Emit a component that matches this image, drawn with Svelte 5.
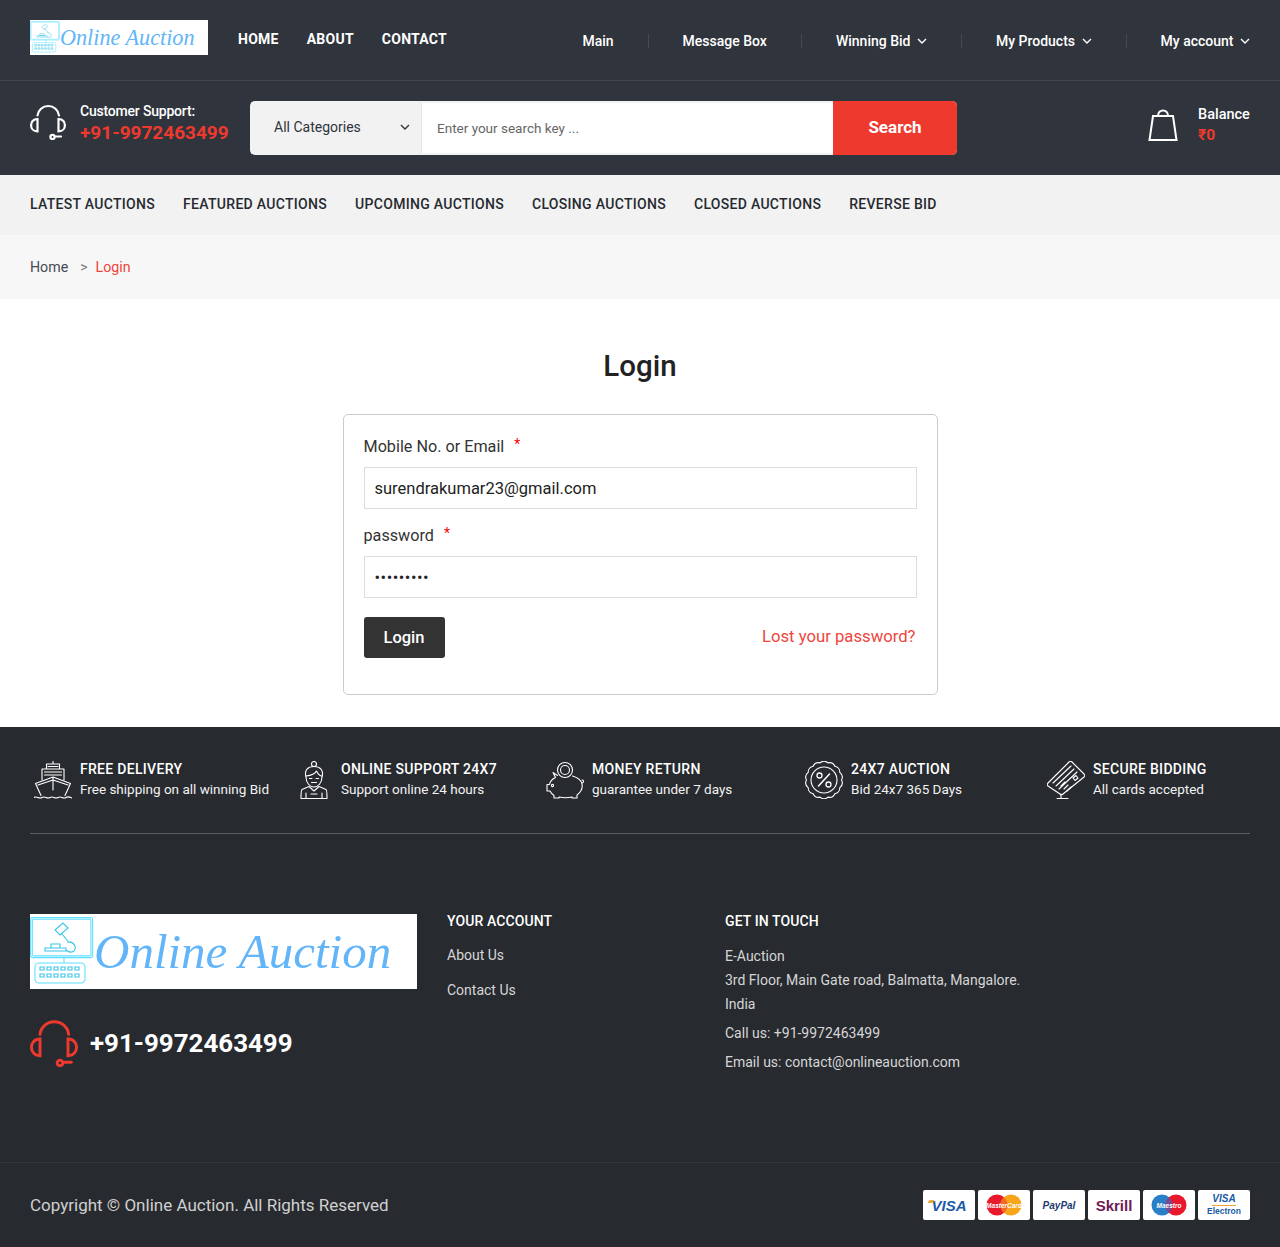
<script>
    const menu = [
        { label: 'Main' },
        { label: 'Message Box' },
        { label: 'Winning Bid', arrow: true },
        { label: 'My Products', arrow: true },
        { label: 'My account', arrow: true }
    ];
    const tabs = ['Latest Auctions', 'Featured Auctions', 'Upcoming Auctions', 'Closing Auctions', 'Closed Auctions', 'Reverse Bid'];
    const services = [
        { icon: 'ship', title: 'Free Delivery', text: 'Free shipping on all winning Bid' },
        { icon: 'agent', title: 'Online Support 24x7', text: 'Support online 24 hours' },
        { icon: 'piggy', title: 'Money Return', text: 'guarantee under 7 days' },
        { icon: 'badge', title: '24x7 Auction', text: 'Bid 24x7 365 Days' },
        { icon: 'card', title: 'Secure Bidding', text: 'All cards accepted' }
    ];

    // scalloped edge of the percent badge
    const scallop = Array.from({ length: 14 }, (_, i) => {
        const a = (i / 14) * Math.PI * 2;
        const x = (19 + 17.5 * Math.cos(a)).toFixed(1);
        const y = (19 + 17.5 * Math.sin(a)).toFixed(1);
        return `${i === 0 ? 'M' : 'A6 6 0 0 1 '}${x} ${y}`;
    }).join(' ') + ' A6 6 0 0 1 36.500 19Z';
</script>

{#snippet headset(cls)}
    <svg class={cls} viewBox="0 0 36 36" fill="none" stroke="currentColor" stroke-width="2.200" stroke-linecap="round">
        <path d="M7.500 11.500A10.800 10.500 0 0 1 29 11.500" />
        <path d="M7.500 15V27.500C3 27.500 1.100 24 1.100 21.200C1.100 18.500 3 15 7.500 15Z" />
        <path d="M28.500 15V27.500C33 27.500 34.900 24 34.900 21.200C34.900 18.500 33 15 28.500 15Z" />
        <circle cx="22.500" cy="33" r="2.100" />
        <path d="M25 32.500H31" />
    </svg>
{/snippet}

{#snippet logo(cls)}
    <div class="logo {cls}">
        <svg class="logo-mark" viewBox="0 0 64 70" fill="none" stroke="#5fe0ff" stroke-width="1.100">
            <rect x="0.600" y="0.600" width="62" height="40" rx="2" />
            <rect x="2.300" y="2.300" width="58.600" height="36.600" rx="1.500" />
            <path d="M34 41V46" />
            <rect x="5" y="46" width="50" height="20" rx="4" />
            <path d="M25 13L33 6L38 11L30 18ZM31 16L38 24M15 31H36V34H15ZM21 27H30V31H21Z" stroke="#39c5e8" />
            <path d="M37 25C44 24 47 30 44 34C41 36 38 35 36 33" stroke="#39c5e8" />
            <path d="M10 50h4v3h-4zM17 50h4v3h-4zM24 50h4v3h-4zM31 50h4v3h-4zM38 50h4v3h-4zM45 50h4v3h-4zM10 57h4v3h-4zM17 57h4v3h-4zM24 57h4v3h-4zM31 57h4v3h-4zM38 57h4v3h-4zM45 57h4v3h-4z" stroke="#39c5e8" />
        </svg>
        <span class="logo-text">Online Auction</span>
    </div>
{/snippet}

{#snippet chevron()}
    <svg class="chev" viewBox="0 0 10 6" fill="none" stroke="currentColor" stroke-width="1.400"><path d="M1 1L5 5L9 1" /></svg>
{/snippet}

{#snippet serviceIcon(name)}
    <svg class="svc-icon" viewBox="0 0 38 38" fill="none" stroke="#fff" stroke-width="1.100" stroke-linejoin="round" stroke-linecap="round">
        {#if name === 'ship'}
            <path d="M19 0V3M12.500 8V3H25.500V8M8 19V8H30V19M14 5.500H24M10.500 11H27.500M10.500 14H27.500" />
            <path d="M19 16L1.500 22.500L7 34.500M19 16L36.500 22.500L31 34.500M19 16V29M4 24L19 19L34 24" />
            <path d="M0 36.500C3 34.500 5 38.500 8 36.500C11 34.500 13 38.500 16 36.500C19 34.500 21 38.500 24 36.500C27 34.500 29 38.500 32 36.500C34 35 36 36 38 37" />
        {:else if name === 'agent'}
            <circle cx="19" cy="3" r="2.500" />
            <path d="M11 16C9 9 13 5.500 19 5.500C25 5.500 29 9 27 16C27 22 23 26 19 26C15 26 11 22 11 16Z" />
            <path d="M11 15C16 14.500 20 13 21.500 10C23 13 25 15 27 15M14.500 17.500H17M21 17.500H23.500M16.500 21.500H21.500" />
            <path d="M14 25.500L7 28.500C6 29 6 31 6 37.500H32C32 31 32 29 31 28.500L24 25.500M14 25.500L19 30L24 25.500M11 37.500V32M27 37.500V32M16 33H22" />
        {:else if name === 'piggy'}
            <circle cx="19" cy="9" r="7.500" />
            <circle cx="19" cy="9" r="4.500" />
            <path d="M11.500 14.500C9 13 7 11.500 7 11.500L9.500 16.500C6 18 4 21 3.500 23.500H1V30H4C5 32 6.500 33.500 8 34.500V37H13V36C17 37 22 37 26 36V37H31V34C35 31 37 28 36 23C35 19 32 16.500 26.500 15M36 22C38 22 38 19 36 19" />
            <circle cx="6.500" cy="24.500" r="1.100" />
        {:else if name === 'badge'}
            <path d={scallop} />
            <circle cx="19" cy="19" r="13" />
            <path d="M24.500 13L13.500 25" stroke-width="1.500" />
            <circle cx="14.500" cy="14.500" r="2.500" stroke-width="1.300" />
            <circle cx="23.500" cy="23.500" r="2.500" stroke-width="1.300" />
        {:else}
            <path d="M1 22L22 1C23 0 24 0 25 1L37 13C38 14 38 15 37 16L16 33C15 34 14 34 13 33L1 25C0 24 0 23 1 22Z" />
            <path d="M6 22L24 5M9 25L27 8M12 28L30 11M26 17L29 14.500L31 17L28 19.500ZM14 25L18 21M17 28L21 24M20 30L24 26" />
            <path d="M10 37.500H21M14 33V37.500" />
        {/if}
    </svg>
{/snippet}

<header class="topbar">
    {@render logo('logo-small')}
    <nav class="mainnav">
        <a href="#home">Home</a>
        <a href="#about">About</a>
        <a href="#contact">Contact</a>
    </nav>
    <ul class="usermenu">
        {#each menu as item}
            <li>{item.label}{#if item.arrow}{@render chevron()}{/if}</li>
        {/each}
    </ul>
</header>

<section class="searchbar">
    <div class="support">
        {@render headset('support-icon')}
        <div class="support-text">
            <div class="support-label">Customer Support:</div>
            <div class="support-phone">+91-9972463499</div>
        </div>
    </div>
    <form class="search" onsubmit={(e) => e.preventDefault()}>
        <div class="category">All Categories{@render chevron()}</div>
        <input class="search-input" placeholder="Enter your search key ..." />
        <button class="search-btn">Search</button>
    </form>
    <div class="balance">
        <svg class="bag" viewBox="0 0 30 32" fill="none" stroke="#fff" stroke-width="2">
            <path d="M5 7H25L28.500 31H1.500Z" stroke-linejoin="miter" />
            <path d="M10 7C10 -0.500 20 -0.500 20 7" />
        </svg>
        <div>
            <div class="balance-label">Balance</div>
            <div class="balance-value">₹0</div>
        </div>
    </div>
</section>

<nav class="tabs">
    {#each tabs as tab}
        <a href="#tab">{tab}</a>
    {/each}
</nav>

<div class="crumbs">
    <a href="#home">Home</a>
    <span class="crumb-sep">&gt;</span>
    <span class="crumb-now">Login</span>
</div>

<main>
    <h1>Login</h1>
    <form class="login" onsubmit={(e) => e.preventDefault()}>
        <label for="user">Mobile No. or Email <sup>*</sup></label>
        <input id="user" class="field" value="surendrakumar23@gmail.com" />
        <label for="pass">password <sup>*</sup></label>
        <input id="pass" class="field pass" type="password" value="secret123" />
        <div class="login-actions">
            <button class="login-btn">Login</button>
            <a class="lost" href="#lost">Lost your password?</a>
        </div>
    </form>
</main>

<footer>
    <div class="services">
        {#each services as s}
            <div class="service">
                {@render serviceIcon(s.icon)}
                <div>
                    <div class="svc-title">{s.title}</div>
                    <div class="svc-text">{s.text}</div>
                </div>
            </div>
        {/each}
    </div>

    <div class="foot-main">
        <div class="foot-brand">
            {@render logo('logo-big')}
            <div class="foot-phone">
                {@render headset('foot-headset')}
                <span>+91-9972463499</span>
            </div>
        </div>
        <div class="foot-links">
            <h4>Your Account</h4>
            <a href="#about">About Us</a>
            <a href="#contact">Contact Us</a>
        </div>
        <div class="foot-touch">
            <h4>Get In Touch</h4>
            <p>E-Auction<br />3rd Floor, Main Gate road, Balmatta, Mangalore.<br />India</p>
            <p>Call us: +91-9972463499</p>
            <p>Email us: contact@onlineauction.com</p>
        </div>
    </div>

    <div class="foot-bottom">
        <span class="copy">Copyright © Online Auction. All Rights Reserved</span>
        <div class="pays">
            <div class="pay"><span class="visa">VISA</span></div>
            <div class="pay circles">
                <svg viewBox="0 0 36 22"><circle cx="11" cy="11" r="10.500" fill="#e8192c" /><circle cx="25" cy="11" r="10.500" fill="#f9a51a" /><path d="M18 3.200a10.500 10.500 0 0 1 0 15.600a10.500 10.500 0 0 1 0-15.600Z" fill="#f26a21" /></svg>
                <span class="pay-over">MasterCard</span>
            </div>
            <div class="pay"><span class="paypal">PayPal</span></div>
            <div class="pay"><span class="skrill">Skrill</span></div>
            <div class="pay circles">
                <svg viewBox="0 0 36 22"><circle cx="11" cy="11" r="10.500" fill="#2a7fc9" /><circle cx="25" cy="11" r="10.500" fill="#e8192c" /><path d="M18 3.200a10.500 10.500 0 0 1 0 15.600a10.500 10.500 0 0 1 0-15.600Z" fill="#7b4a8e" /></svg>
                <span class="pay-over">Maestro</span>
            </div>
            <div class="pay electron"><span class="el-visa">VISA</span><span class="el-name">Electron</span></div>
        </div>
    </div>
</footer>

<style>
    :global(body) {
        margin: 0;
        font-family: "Roboto", "Liberation Sans", sans-serif;
        color: #222;
        background: #fff;
    }

    a {
        color: inherit;
        text-decoration: none;
    }

    /* top bar */
    .topbar {
        display: flex;
        align-items: center;
        height: 81px;
        padding: 0 30px;
        box-sizing: border-box;
        background: #30343c;
        border-bottom: 1px solid #41454e;
        color: #fff;
    }

    .logo {
        display: flex;
        background: #fff;
        color: #62b5f8;
        box-sizing: border-box;
        flex: none;
        overflow: hidden;
    }

    .logo-text {
        font-family: "Liberation Serif", serif;
        font-style: italic;
        white-space: nowrap;
    }

    .logo-small {
        width: 178px;
        height: 35px;
        align-items: center;
        margin-top: -5px;
    }

    .logo-small .logo-mark {
        width: 30px;
        height: 33px;
        flex: none;
    }

    .logo-small .logo-text {
        font-size: 22.200px;
        margin-left: 0;
    }

    .logo-big {
        width: 387px;
        height: 75px;
        align-items: center;
    }

    .logo-big .logo-mark {
        width: 64px;
        height: 70px;
        flex: none;
    }

    .logo-big .logo-text {
        font-size: 49px;
        margin-left: 0;
    }

    .mainnav {
        display: flex;
        gap: 28px;
        margin-left: 30px;
        margin-top: -2px;
        font-size: 14px;
        font-weight: 700;
        letter-spacing: 0.25px;
        text-transform: uppercase;
    }

    .usermenu {
        display: flex;
        align-items: center;
        margin: 2px 0 0 auto;
        padding: 0;
        list-style: none;
        font-size: 14px;
        font-weight: 500;
    }

    .usermenu li {
        padding: 0 34px;
        border-right: 1px solid #454953;
        line-height: 14px;
        display: flex;
        align-items: center;
    }

    .usermenu li:last-child {
        padding-right: 0;
        border-right: 0;
    }

    .chev {
        width: 10px;
        height: 6px;
        margin-left: 6.500px;
    }

    /* search row */
    .searchbar {
        display: flex;
        align-items: center;
        height: 94px;
        padding: 0 30px;
        background: #30343c;
        color: #fff;
    }

    .support {
        display: flex;
        align-items: center;
        width: 220px;
        flex: none;
        margin-bottom: 12px;
    }

    .support :global(.support-icon) {
        width: 36px;
        height: 36px;
        margin-right: 14px;
        flex: none;
    }

    .support-text {
        margin-top: 4px;
    }

    .support-label {
        font-size: 14px;
        font-weight: 500;
        letter-spacing: -0.2px;
        line-height: 18px;
    }

    .support-phone {
        font-size: 19px;
        font-weight: 700;
        line-height: 26px;
        color: #ee3a2e;
        white-space: nowrap;
    }

    .search {
        display: flex;
        width: 707px;
        height: 54px;
        box-sizing: border-box;
        background: #f2f2f2;
        border: 2px solid #f2f2f2;
        border-right: 0;
        border-radius: 5px;
    }

    .category {
        display: flex;
        align-items: center;
        justify-content: space-between;
        width: 170px;
        padding: 0 11px 2px 22px;
        box-sizing: border-box;
        font-size: 14px;
        color: #30343c;
        border-right: 1px solid #e4e4e4;
    }

    .search-input {
        flex: 1;
        min-width: 0;
        border: 0;
        outline: 0;
        background: #fff;
        padding: 0 15px;
        font: 13.500px "Roboto", sans-serif;
    }

    .search-input::placeholder {
        color: #666;
        opacity: 1;
    }

    .search-btn {
        width: 124px;
        margin: -2px 0;
        padding: 0 0 2px;
        border: 0;
        border-radius: 0 5px 5px 0;
        background: #ee3a2e;
        color: #fff;
        font: 700 17px "Roboto", sans-serif;
    }

    .balance {
        display: flex;
        align-items: center;
        margin-left: auto;
        margin-bottom: 6px;
        width: 102px;
    }

    .bag {
        width: 30px;
        height: 32px;
        margin-right: 20px;
        flex: none;
    }

    .balance-label {
        font-size: 14.500px;
        font-weight: 500;
        line-height: 20px;
    }

    .balance-value {
        font-size: 15.500px;
        font-weight: 700;
        color: #ee3a2e;
        line-height: 20px;
    }

    /* category tabs */
    .tabs {
        display: flex;
        gap: 28px;
        align-items: center;
        height: 60px;
        padding: 0 30px 2px;
        box-sizing: border-box;
        background: #f2f2f2;
        font-size: 14px;
        font-weight: 500;
        letter-spacing: 0.3px;
        text-transform: uppercase;
        color: #262a30;
    }

    .crumbs {
        display: flex;
        align-items: center;
        height: 64px;
        padding: 0 30px;
        background: #f7f7f7;
        font-size: 14.200px;
        color: #444b55;
    }

    .crumb-sep {
        margin: 0 8px 0 12px;
        font-size: 14px;
        color: #777;
    }

    .crumb-now {
        color: #ee4540;
    }

    /* login */
    main {
        height: 428px;
        padding-top: 50px;
        box-sizing: border-box;
    }

    h1 {
        margin: 0 0 31px;
        text-align: center;
        font-size: 29.500px;
        font-weight: 500;
        line-height: 34px;
        color: #222;
    }

    .login {
        width: 595px;
        height: 281px;
        margin: 0 auto;
        padding: 20px;
        box-sizing: border-box;
        border: 1px solid #ccc;
        border-radius: 5px;
    }

    label {
        display: block;
        font-size: 16.200px;
        line-height: 24px;
        color: #333;
        margin-bottom: 8px;
    }

    sup {
        color: #f00;
        margin-left: 6px;
        font-size: 14px;
        line-height: 0;
        vertical-align: 3px;
    }

    .field {
        display: block;
        width: 100%;
        height: 42px;
        box-sizing: border-box;
        padding: 0 10px;
        margin-bottom: 15px;
        border: 1px solid #ddd;
        outline: 0;
        color: #222;
        font: 16.500px "Roboto", sans-serif;
    }

    .pass {
        letter-spacing: 0.5px;
    }

    .login-actions {
        display: flex;
        align-items: center;
        justify-content: space-between;
        margin-top: 19px;
    }

    .login-btn {
        width: 81px;
        height: 41px;
        border: 0;
        border-radius: 3px;
        background: #333;
        color: #fff;
        font: 500 16.500px "Roboto", sans-serif;
    }

    .lost {
        margin: -3px 1px 0 0;
        font-size: 16.700px;
        color: #ee4540;
    }

    /* footer */
    footer {
        height: 520px;
        background: #272a2f;
        color: #fff;
    }

    .services {
        display: grid;
        grid-template-columns: 270px 246px 259px 242px 1fr;
        height: 107px;
        margin: 0 30px;
        box-sizing: border-box;
        padding-top: 32px;
        border-bottom: 1px solid #5a5d62;
    }

    .service {
        display: flex;
        align-items: flex-start;
        gap: 8px;
    }

    .svc-icon {
        width: 38px;
        height: 38px;
        flex: none;
        margin-top: 2px;
    }

    .service:nth-child(1) .svc-icon {
        margin-left: 4px;
    }

    .service:nth-child(2) .svc-icon {
        margin-left: -5px;
    }

    .svc-title {
        font-size: 14px;
        font-weight: 500;
        line-height: 20px;
        letter-spacing: 0.3px;
        text-transform: uppercase;
        white-space: nowrap;
    }

    .svc-text {
        font-size: 13.500px;
        line-height: 20px;
        color: #f2f2f2;
        white-space: nowrap;
    }

    .foot-main {
        display: flex;
        height: 329px;
        padding: 80px 30px 0;
        box-sizing: border-box;
        border-bottom: 1px solid #33363b;
    }

    .foot-brand {
        width: 417px;
        flex: none;
    }

    .foot-phone {
        display: flex;
        align-items: center;
        margin-top: 30px;
        font-size: 25.900px;
        font-weight: 700;
    }

    .foot-phone :global(.foot-headset) {
        width: 48px;
        height: 48px;
        margin-right: 12px;
        color: #ee3a2e;
    }

    h4 {
        margin: -1px 0 0;
        font-size: 14px;
        font-weight: 500;
        line-height: 16px;
        text-transform: uppercase;
        letter-spacing: 0.1px;
    }

    .foot-links {
        width: 278px;
        flex: none;
        display: flex;
        flex-direction: column;
        font-size: 14px;
        color: #d6d6d6;
    }

    .foot-links h4 {
        color: #fff;
        margin-bottom: 14px;
    }

    .foot-links a {
        line-height: 24px;
        margin-bottom: 11px;
    }

    .foot-touch h4 {
        margin-bottom: 15px;
    }

    .foot-touch p {
        margin: 0 0 5px;
        font-size: 14px;
        line-height: 24px;
        color: #d6d6d6;
    }

    .foot-bottom {
        display: flex;
        align-items: center;
        justify-content: space-between;
        height: 84px;
        padding: 0 30px;
    }

    .copy {
        font-size: 17px;
        color: #d0d0d0;
    }

    .pays {
        display: flex;
        gap: 3px;
    }

    .pay {
        position: relative;
        display: flex;
        align-items: center;
        justify-content: center;
        width: 52px;
        height: 30px;
        background: #fff;
        border-radius: 2px;
        font-family: "Liberation Sans", sans-serif;
    }

    .visa {
        position: relative;
        font-size: 15px;
        font-weight: 700;
        font-style: italic;
        color: #1a5ba6;
    }

    .visa::before {
        content: "";
        position: absolute;
        left: -3px;
        top: 3px;
        width: 6px;
        height: 3px;
        background: #f0a531;
        border-radius: 3px 0 3px 0;
    }

    .paypal {
        font-size: 10px;
        font-weight: 700;
        font-style: italic;
        color: #1c3a6e;
    }

    .skrill {
        font-size: 15px;
        font-weight: 700;
        color: #6e1c54;
    }

    .circles svg {
        width: 36px;
        height: 22px;
    }

    .pay-over {
        position: absolute;
        inset: 0;
        display: flex;
        align-items: center;
        justify-content: center;
        font-size: 6.500px;
        font-weight: 700;
        font-style: italic;
        color: #fff;
    }

    .electron {
        flex-direction: column;
        line-height: 1;
    }

    .el-visa {
        font-size: 10px;
        font-weight: 700;
        font-style: italic;
        color: #1a5ba6;
        border-bottom: 1px solid #f0a531;
        padding-bottom: 1px;
        margin-bottom: 1px;
    }

    .el-name {
        font-size: 8.500px;
        font-weight: 700;
        color: #1a5ba6;
    }
</style>
